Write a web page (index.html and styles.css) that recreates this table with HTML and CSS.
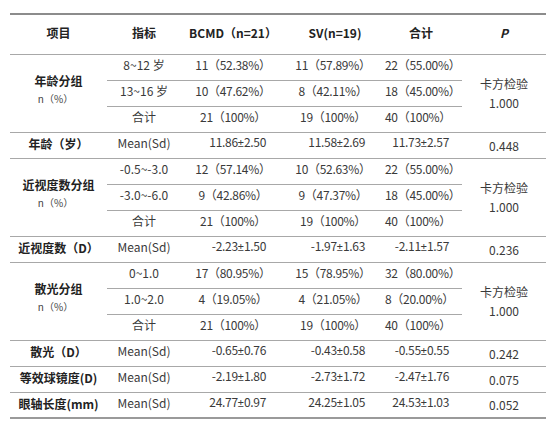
FILE: index.html
```html
<!DOCTYPE html>
<html lang="zh-CN">
<head>
    <meta charset="UTF-8">
    <meta name="viewport" content="width=device-width, initial-scale=1.0">
    <title>基线资料比较</title>
    <link rel="stylesheet" href="styles.css">
</head>
<body>
    <table class="stats">
        <colgroup>
            <col class="c-item">
            <col class="c-index">
            <col class="c-bcmd">
            <col class="c-sv">
            <col class="c-total">
            <col class="c-p">
        </colgroup>
        <thead>
            <tr>
                <th>项目</th>
                <th>指标</th>
                <th>BCMD（n=21）</th>
                <th>SV(n=19)</th>
                <th class="h-total">合计</th>
                <th><i>P</i></th>
            </tr>
        </thead>
        <tbody>
            <!-- 年龄分组 -->
            <tr class="sub">
                <td rowspan="3" class="item group">年龄分组<span class="unit">n（%）</span></td>
                <td>8~12 岁</td>
                <td class="bcmd">11（52.38%）</td>
                <td class="sv">11（57.89%）</td>
                <td class="total">22（55.00%）</td>
                <td rowspan="3" class="p">卡方检验<br>1.000</td>
            </tr>
            <tr class="sub">
                <td>13~16 岁</td>
                <td class="bcmd">10（47.62%）</td>
                <td class="sv">8（42.11%）</td>
                <td class="total">18（45.00%）</td>
            </tr>
            <tr class="end">
                <td>合计</td>
                <td class="bcmd">21（100%）</td>
                <td class="sv">19（100%）</td>
                <td class="total">40（100%）</td>
            </tr>
            <tr class="end">
                <td class="item">年龄（岁）</td>
                <td>Mean(Sd)</td>
                <td class="bcmd mean">11.86<span class="pm">±</span>2.50</td>
                <td class="sv mean">11.58<span class="pm">±</span>2.69</td>
                <td class="total mean">11.73<span class="pm">±</span>2.57</td>
                <td class="p">0.448</td>
            </tr>

            <!-- 近视度数分组 -->
            <tr class="sub">
                <td rowspan="3" class="item group">近视度数分组<span class="unit">n（%）</span></td>
                <td>-0.5~-3.0</td>
                <td class="bcmd">12（57.14%）</td>
                <td class="sv">10（52.63%）</td>
                <td class="total">22（55.00%）</td>
                <td rowspan="3" class="p">卡方检验<br>1.000</td>
            </tr>
            <tr class="sub">
                <td>-3.0~-6.0</td>
                <td class="bcmd">9（42.86%）</td>
                <td class="sv">9（47.37%）</td>
                <td class="total">18（45.00%）</td>
            </tr>
            <tr class="end">
                <td>合计</td>
                <td class="bcmd">21（100%）</td>
                <td class="sv">19（100%）</td>
                <td class="total">40（100%）</td>
            </tr>
            <tr class="end">
                <td class="item">近视度数（D）</td>
                <td>Mean(Sd)</td>
                <td class="bcmd mean">-2.23<span class="pm">±</span>1.50</td>
                <td class="sv mean">-1.97<span class="pm">±</span>1.63</td>
                <td class="total mean">-2.11<span class="pm">±</span>1.57</td>
                <td class="p">0.236</td>
            </tr>

            <!-- 散光分组 -->
            <tr class="sub">
                <td rowspan="3" class="item group">散光分组<span class="unit">n（%）</span></td>
                <td>0~1.0</td>
                <td class="bcmd">17（80.95%）</td>
                <td class="sv">15（78.95%）</td>
                <td class="total">32（80.00%）</td>
                <td rowspan="3" class="p">卡方检验<br>1.000</td>
            </tr>
            <tr class="sub">
                <td>1.0~2.0</td>
                <td class="bcmd">4（19.05%）</td>
                <td class="sv">4（21.05%）</td>
                <td class="total">8（20.00%）</td>
            </tr>
            <tr class="end">
                <td>合计</td>
                <td class="bcmd">21（100%）</td>
                <td class="sv">19（100%）</td>
                <td class="total">40（100%）</td>
            </tr>
            <tr class="end">
                <td class="item">散光（D）</td>
                <td>Mean(Sd)</td>
                <td class="bcmd mean">-0.65<span class="pm">±</span>0.76</td>
                <td class="sv mean">-0.43<span class="pm">±</span>0.58</td>
                <td class="total mean">-0.55<span class="pm">±</span>0.55</td>
                <td class="p">0.242</td>
            </tr>
            <tr class="end">
                <td class="item">等效球镜度(D)</td>
                <td>Mean(Sd)</td>
                <td class="bcmd mean">-2.19<span class="pm">±</span>1.80</td>
                <td class="sv mean">-2.73<span class="pm">±</span>1.72</td>
                <td class="total mean">-2.47<span class="pm">±</span>1.76</td>
                <td class="p">0.075</td>
            </tr>
            <tr class="last">
                <td class="item">眼轴长度(mm)</td>
                <td>Mean(Sd)</td>
                <td class="bcmd mean">24.77<span class="pm">±</span>0.97</td>
                <td class="sv mean">24.25<span class="pm">±</span>1.05</td>
                <td class="total mean">24.53<span class="pm">±</span>1.03</td>
                <td class="p">0.052</td>
            </tr>
        </tbody>
    </table>
</body>
</html>
```

FILE: styles.css
```css
body {
    margin: 0;
    padding: 13px 8px 0 10px;
    background-color: #fff;
    color: #3a3a3a;
    font-family: "Noto Sans CJK SC", "Noto Sans", sans-serif;
    font-size: 12px;
}

.stats {
    width: 536px;
    border-collapse: collapse;
    table-layout: fixed;
    border-top: 2px solid #8c8c8c;
    border-bottom: 2px solid #9a9a9a;
}

.c-item { width: 97px; }
.c-index { width: 74px; }
.c-bcmd { width: 104px; }
.c-sv { width: 100px; }
.c-total { width: 77px; }
.c-p { width: 84px; }

thead tr {
    height: 40px;
}

tbody tr {
    height: 26px;
}

th {
    padding: 0 0 3px;
    font-weight: bold;
    font-size: 12px;
    color: #222;
    text-align: center;
    border-bottom: 1px solid #a8a8a8;
}

th i {
    font-weight: bold;
}

th.h-total {
    padding-right: 5px;
}

td {
    padding: 0 0 5px;
    line-height: 15px;
    text-align: center;
    vertical-align: middle;
    white-space: nowrap;
}

tr.sub td,
tr.end td {
    border-bottom: 1px solid #a8a8a8;
}

.item {
    font-weight: bold;
    color: #222;
    padding-bottom: 3px;
}

.group {
    padding-bottom: 6px;
    line-height: 18px;
}

.unit {
    display: block;
    font-weight: normal;
    font-size: 10px;
    color: #444;
    margin-right: 6px;
}

.bcmd,
.sv,
.total {
    letter-spacing: -0.3px;
}

.sv {
    padding-right: 4px;
}

.total {
    padding-right: 13px;
}

.mean {
    text-align: right;
}

.pm {
    font-family: "Liberation Sans", sans-serif;
    font-size: 11px;
    letter-spacing: 0;
}

.bcmd.mean {
    padding-right: 19px;
}

.sv.mean {
    padding-right: 20px;
}

.total.mean {
    padding-right: 13px;
}

td.p {
    padding: 0;
    line-height: 19px;
}
```
